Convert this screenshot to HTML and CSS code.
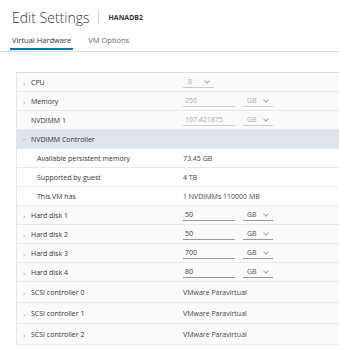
FILE: index.html
```html
<!DOCTYPE html>
<html>
<head>
<meta charset="utf-8">
<link rel="stylesheet" href="styles.css">
</head>
<body>
<div class="page">
  <div class="header">
    <span class="title">Edit Settings</span>
    <span class="sep"></span>
    <span class="vmname">HANADB2</span>
  </div>
  <div class="tabs">
    <span class="tab active">Virtual Hardware</span>
    <span class="tab">VM Options</span>
  </div>
  <div class="table">
    <div class="row head">
      <div class="label"><span class="chev">&#8250;</span>CPU</div>
      <div class="val"><span class="sel dis w31">8<span class="dd"></span></span></div>
    </div>
    <div class="row head">
      <div class="label"><span class="chev">&#8250;</span>Memory</div>
      <div class="val"><span class="inp dis">250</span><span class="sel dis w30">GB<span class="dd"></span></span></div>
    </div>
    <div class="row head">
      <div class="label"><span class="chev"></span>NVDIMM 1</div>
      <div class="val"><span class="inp dis">107.421875</span><span class="sel dis w30">GB<span class="dd"></span></span></div>
    </div>
    <div class="row head open">
      <div class="label"><span class="chev down">&#8250;</span>NVDIMM Controller</div>
      <div class="val"></div>
    </div>
    <div class="row sub">
      <div class="label">Available persistent memory</div>
      <div class="val">73.45 GB</div>
    </div>
    <div class="row sub">
      <div class="label">Supported by guest</div>
      <div class="val">4 TB</div>
    </div>
    <div class="row sub">
      <div class="label">This VM has</div>
      <div class="val">1 NVDIMMs 110000 MB</div>
    </div>
    <div class="row head">
      <div class="label"><span class="chev">&#8250;</span>Hard disk 1</div>
      <div class="val"><span class="inp">50</span><span class="sel w30">GB<span class="dd"></span></span></div>
    </div>
    <div class="row head">
      <div class="label"><span class="chev">&#8250;</span>Hard disk 2</div>
      <div class="val"><span class="inp">50</span><span class="sel w30">GB<span class="dd"></span></span></div>
    </div>
    <div class="row head">
      <div class="label"><span class="chev">&#8250;</span>Hard disk 3</div>
      <div class="val"><span class="inp">700</span><span class="sel w30">GB<span class="dd"></span></span></div>
    </div>
    <div class="row head">
      <div class="label"><span class="chev">&#8250;</span>Hard disk 4</div>
      <div class="val"><span class="inp">80</span><span class="sel w30">GB<span class="dd"></span></span></div>
    </div>
    <div class="row head tall">
      <div class="label"><span class="chev">&#8250;</span>SCSI controller 0</div>
      <div class="val">VMware Paravirtual</div>
    </div>
    <div class="row head tall">
      <div class="label"><span class="chev">&#8250;</span>SCSI controller 1</div>
      <div class="val">VMware Paravirtual</div>
    </div>
    <div class="row head tall">
      <div class="label"><span class="chev">&#8250;</span>SCSI controller 2</div>
      <div class="val">VMware Paravirtual</div>
    </div>
  </div>
</div>
</body>
</html>
```
FILE: styles.css
```css
html, body {
  margin: 0;
  padding: 0;
  background: #fff;
  overflow: hidden;
}
body {
  width: 339px;
  height: 349px;
  font-family: "Open Sans", "Liberation Sans", sans-serif;
  color: #333;
}
.page {
  padding-top: 6px;
}
.header {
  display: flex;
  align-items: center;
  padding-left: 12px;
  height: 22px;
}
.title {
  font-family: "Open Sans", sans-serif;
  font-weight: 300;
  font-size: 14px;
  color: #333;
}
.sep {
  width: 1px;
  height: 12px;
  background: #ccc;
  margin: 0 9px 0 9px;
}
.vmname {
  font-size: 7px;
  font-weight: 700;
  color: #333;
}
.tabs {
  display: flex;
  margin-top: 7px;
  border-bottom: 1px solid #dedede;
  height: 16px;
  align-items: flex-start;
}
.tab {
  font-size: 7.5px;
  color: #666;
  padding: 0 2px;
  height: 14px;
  line-height: 11px;
}
.tab.active {
  color: #333;
  margin-left: 10px;
  border-bottom: 2px solid #0079b8;
  height: 13px;
}
.tab + .tab {
  margin-left: 13px;
}
.table {
  margin-top: 20px;
  margin-left: 16px;
  border-left: 1px solid #e4e4e4;
  border-top: 1px solid #dcdcdc;
}
.row {
  display: flex;
  align-items: center;
  height: 19px;
  box-sizing: border-box;
  border-bottom: 1px solid #e8e8e8;
  font-size: 7px;
  color: #333;
}
.row.tall {
  height: 21px;
}
.row.head {
  background: #fafafa;
}
.row.open {
  background: #dde4ec;
}
.row.sub {
  background: #fff;
}
.label {
  width: 166px;
  display: flex;
  align-items: center;
  padding-left: 6px;
  box-sizing: border-box;
}
.row.sub .label {
  padding-left: 20px;
}
.chev {
  width: 8px;
  color: #aaa;
  font-size: 8px;
  display: inline-block;
}
.chev.down {
  transform: rotate(90deg);
  width: 5px;
  margin-right: 3px;
  text-align: center;
}
.val {
  display: flex;
  align-items: center;
  color: #444;
}
.inp {
  width: 52px;
  box-sizing: border-box;
  padding-left: 2px;
  border-bottom: 1px solid #999;
  height: 12px;
  line-height: 11px;
  color: #333;
}
.inp.dis {
  color: #aaa;
  border-bottom-color: #ccc;
}
.sel {
  position: relative;
  box-sizing: border-box;
  padding-left: 4px;
  border-bottom: 1px solid #999;
  height: 12px;
  line-height: 11px;
  margin-left: 8px;
  color: #555;
}
.val > .sel:first-child {
  margin-left: 0;
  padding-left: 5px;
}
.sel.dis {
  color: #aaa;
  border-bottom-color: #ccc;
}
.w31 { width: 31px; }
.w30 { width: 30px; }
.dd {
  position: absolute;
  right: 5px;
  top: 3px;
  width: 3px;
  height: 3px;
  border-right: 1px solid #aaa;
  border-bottom: 1px solid #aaa;
  transform: rotate(45deg);
}
```
